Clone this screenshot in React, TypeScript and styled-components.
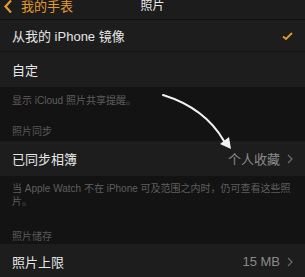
import { FC } from "react";
import styled, { createGlobalStyle } from "styled-components";

const GlobalStyle = createGlobalStyle`
  html, body {
    margin: 0;
    padding: 0;
    background: #131313;
  }
  body {
    font-family: "Liberation Sans", "Noto Sans CJK SC", sans-serif;
    -webkit-font-smoothing: antialiased;
  }
`;

const Screen = styled.div`
  position: relative;
  width: 305px;
  height: 277px;
  overflow: hidden;
  background: #131313;
`;

const NavBar = styled.div`
  position: relative;
  display: flex;
  align-items: center;
  height: 20px;
  padding: 0 0 7px 4px;
  box-sizing: border-box;
  background: #1c1c1c;
  border-bottom: 1px solid #111;
`;

const BackButton = styled.div`
  display: flex;
  align-items: center;
  gap: 9px;
  color: #e39a2a;
  font-size: 13px;
  line-height: 13px;
`;

const NavTitle = styled.div`
  position: absolute;
  left: 0;
  right: 0;
  top: 0;
  text-align: center;
  color: #e8e8e8;
  font-size: 12px;
  line-height: 12px;
`;

const Group = styled.div`
  background: #1d1d1d;
`;

const Row = styled.div<{ $height: number; $divider?: boolean }>`
  display: flex;
  align-items: center;
  justify-content: space-between;
  height: ${(p) => p.$height}px;
  padding: 0 12px;
  box-sizing: border-box;
  border-bottom: ${(p) => (p.$divider ? "1px solid #141414" : "none")};
`;

const Label = styled.span`
  color: #e6e6e6;
  font-size: 13px;
`;

const Detail = styled.span`
  display: flex;
  align-items: center;
  gap: 7px;
  color: #8a8a8a;
  font-size: 13px;
`;

const Footer = styled.div<{ $top: number; $bottom: number }>`
  padding: ${(p) => p.$top}px 12px ${(p) => p.$bottom}px;
  color: #5e5e5e;
  font-size: 10px;
  line-height: 13px;
`;

const SectionTitle = styled.div<{ $bottom: number }>`
  padding: 0 12px ${(p) => p.$bottom}px;
  color: #595959;
  font-size: 10px;
  line-height: 12px;
`;

const Arrow = styled.svg`
  position: absolute;
  left: 0;
  top: 0;
  pointer-events: none;
`;

const Chevron: FC = () => (
  <svg width="6" height="10" viewBox="0 0 6 10">
    <polyline points="1,1 5,5 1,9" fill="none" stroke="#6a6a6a" strokeWidth="1.2" />
  </svg>
);

const App: FC = () => {
  return (
    <Screen>
      <GlobalStyle />
      <NavBar>
        <BackButton>
          <svg width="8" height="13" viewBox="0 0 8 13">
            <polyline
              points="7,0.5 1.5,6.5 7,12.5"
              fill="none"
              stroke="#e39a2a"
              strokeWidth="2.2"
            />
          </svg>
          我的手表
        </BackButton>
        <NavTitle>照片</NavTitle>
      </NavBar>

      <Group>
        <Row $height={32} $divider>
          <Label>从我的 iPhone 镜像</Label>
          <svg width="11" height="8" viewBox="0 0 11 8">
            <polyline
              points="1,4.5 4,7 10,1"
              fill="none"
              stroke="#e39a2a"
              strokeWidth="1.8"
            />
          </svg>
        </Row>
        <Row $height={35}>
          <Label>自定</Label>
        </Row>
      </Group>
      <Footer $top={7} $bottom={19}>显示 iCloud 照片共享提醒。</Footer>

      <SectionTitle $bottom={3}>照片同步</SectionTitle>
      <Group>
        <Row $height={35}>
          <Label>已同步相簿</Label>
          <Detail>
            个人收藏
            <Chevron />
          </Detail>
        </Row>
      </Group>
      <Footer $top={6} $bottom={23}>
        当 Apple Watch 不在 iPhone 可及范围之内时，仍可查看这些照片。
      </Footer>

      <SectionTitle $bottom={1}>照片储存</SectionTitle>
      <Group>
        <Row $height={35}>
          <Label>照片上限</Label>
          <Detail>
            15 MB
            <Chevron />
          </Detail>
        </Row>
      </Group>

      <Arrow width="305" height="277" viewBox="0 0 305 277">
        <path
          d="M163 95 Q205 108 224 141"
          fill="none"
          stroke="#f2f2f2"
          strokeWidth="2"
          strokeLinecap="round"
        />
        <polygon points="220,144 229,137 231,149" fill="#f2f2f2" />
      </Arrow>
    </Screen>
  );
};

export default App;
